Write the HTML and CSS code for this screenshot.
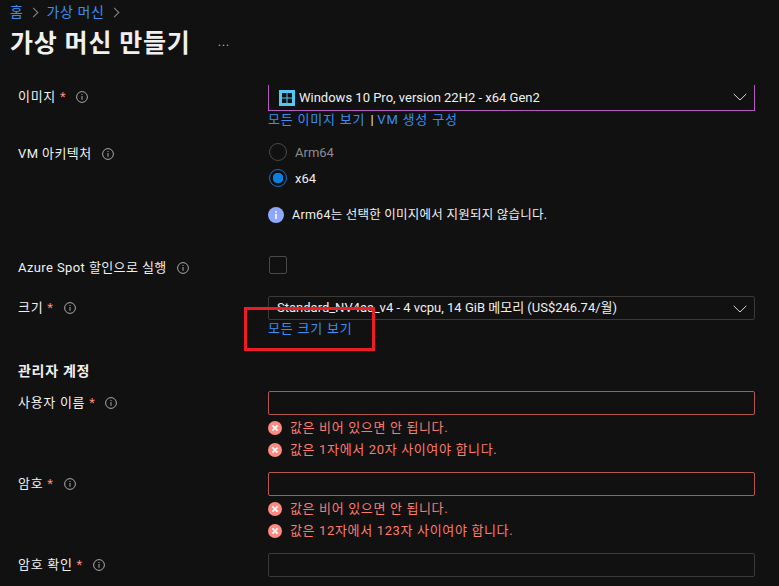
FILE: index.html
```html
<!DOCTYPE html>
<html lang="ko">
<head>
    <meta charset="UTF-8">
    <meta name="viewport" content="width=device-width, initial-scale=1.0">
    <title>가상 머신 만들기</title>
    <link rel="stylesheet" href="styles.css">
</head>
<body>
    <svg class="sprites" width="0" height="0">
        <symbol id="info" viewBox="0 0 12 12">
            <circle cx="6" cy="6" r="5.4" fill="none" stroke="currentColor"/>
            <rect x="5.5" y="5" width="1" height="3.8" fill="currentColor"/>
            <rect x="5.5" y="3" width="1" height="1" fill="currentColor"/>
        </symbol>
        <symbol id="err" viewBox="0 0 14 14">
            <circle cx="7" cy="7" r="7" fill="#ff8a80"/>
            <path d="M4.4 4.4l5.2 5.2M9.6 4.4l-5.2 5.2" stroke="#fff" stroke-width="1.7" fill="none"/>
        </symbol>
        <symbol id="chev" viewBox="0 0 14 8">
            <path d="M.7 .9L7 7l6.3-6.1" stroke="#d6d6d6" stroke-width="1" fill="none"/>
        </symbol>
    </svg>

    <header class="top">
        <nav class="crumbs">
            <a href="#">홈</a><span class="sep"></span>
            <a href="#">가상 머신</a><span class="sep"></span>
        </nav>
        <div class="title-row">
            <h1>가상 머신 만들기</h1>
            <span class="more">...</span>
        </div>
    </header>

    <main class="form">
        <div class="row row-image">
            <div class="label">이미지 <span class="req">*</span><svg class="i"><use href="#info"/></svg></div>
            <div class="field">
                <div class="select select-focus">
                    <span class="win">
                        <svg width="10" height="10" viewBox="0 0 10 10"><path fill="#111" d="M0 0h4.5v4.5H0zM5.5 0H10v4.5H5.5zM0 5.5h4.5V10H0zM5.5 5.5H10V10H5.5z"/></svg>
                    </span>
                    <span>Windows 10 Pro, version 22H2 - x64 Gen2</span>
                    <svg class="chev"><use href="#chev"/></svg>
                </div>
                <div class="links"><a href="#">모든 이미지 보기</a><span class="bar">|</span><a href="#">VM 생성 구성</a></div>
            </div>
        </div>

        <div class="row row-arch">
            <div class="label label-tight">VM 아키텍처<svg class="i i-wide"><use href="#info"/></svg></div>
            <div class="field radios">
                <div class="radio radio-off"><span class="dot"></span>Arm64</div>
                <div class="radio radio-on"><span class="dot"></span>x64</div>
                <div class="note">
                    <svg width="16" height="16" viewBox="0 0 16 16"><circle cx="8" cy="8" r="8" fill="#8fa8ff"/><rect x="7.2" y="6.8" width="1.6" height="5.2" fill="#fff"/><rect x="7.2" y="4" width="1.6" height="1.7" fill="#fff"/></svg>
                    <span>Arm64는 선택한 이미지에서 지원되지 않습니다.</span>
                </div>
            </div>
        </div>

        <div class="row row-spot">
            <div class="label label-tight">Azure Spot 할인으로 실행<svg class="i i-wide"><use href="#info"/></svg></div>
            <div class="field"><div class="check"></div></div>
        </div>

        <div class="row row-size">
            <div class="label">크기 <span class="req">*</span><svg class="i"><use href="#info"/></svg></div>
            <div class="field">
                <div class="select">
                    <span>Standard_NV4as_v4 - 4 vcpu, 14 GiB 메모리 (US$246.74/월)</span>
                    <svg class="chev"><use href="#chev"/></svg>
                </div>
                <div class="links"><a href="#">모든 크기 보기</a></div>
            </div>
        </div>

        <h2>관리자 계정</h2>

        <div class="row row-user">
            <div class="label">사용자 이름 <span class="req">*</span><svg class="i"><use href="#info"/></svg></div>
            <div class="field">
                <div class="input input-bad"></div>
                <div class="err"><svg><use href="#err"/></svg>값은 비어 있으면 안 됩니다.</div>
                <div class="err"><svg><use href="#err"/></svg>값은 1자에서 20자 사이여야 합니다.</div>
            </div>
        </div>

        <div class="row row-pass">
            <div class="label">암호 <span class="req">*</span><svg class="i"><use href="#info"/></svg></div>
            <div class="field">
                <div class="input input-bad"></div>
                <div class="err"><svg><use href="#err"/></svg>값은 비어 있으면 안 됩니다.</div>
                <div class="err"><svg><use href="#err"/></svg>값은 12자에서 123자 사이여야 합니다.</div>
            </div>
        </div>

        <div class="row row-confirm">
            <div class="label">암호 확인 <span class="req">*</span><svg class="i"><use href="#info"/></svg></div>
            <div class="field"><div class="input"></div></div>
        </div>
    </main>

    <!-- 스크린샷 위에 그려진 강조 박스 -->
    <div class="highlight"></div>
</body>
</html>
```

FILE: styles.css
```css
:root {
    --bg: #111111;
    --text: #f0f0f0;
    --link: #3a8ef0;
    --line: #3b3a39;
}

html, body {
    height: 100%;
}

body {
    margin: 0;
    background-color: var(--bg);
    color: var(--text);
    font-family: Roboto, "Noto Sans CJK KR", sans-serif;
    font-size: 13px;
    line-height: 18px;
    overflow: hidden;
    position: relative;
}

a {
    color: var(--link);
    text-decoration: none;
}

.sprites {
    position: absolute;
}

.top {
    height: 85px;
    padding-left: 10px;
}

.crumbs {
    display: flex;
    align-items: center;
    height: 24px;
    font-size: 14px;
    letter-spacing: 0.6px;
}

.sep {
    width: 6px;
    height: 6px;
    margin: 0 9px 0 7px;
    border-top: 1px solid #8a8a8a;
    border-right: 1px solid #8a8a8a;
    transform: rotate(45deg);
}

.title-row {
    display: flex;
    align-items: center;
    height: 40px;
}

h1 {
    margin: 0;
    font-size: 25px;
    font-weight: 700;
    letter-spacing: 0.8px;
    line-height: 40px;
}

.more {
    margin: 0 0 4px 27px;
    color: #a6a6a6;
    font-size: 13px;
    letter-spacing: 0.6px;
}

.row {
    display: grid;
    grid-template-columns: 250px 487px;
    padding-left: 18px;
}

.label {
    display: flex;
    align-items: center;
    height: 24px;
    letter-spacing: 0.7px;
    white-space: pre;
}

.label-tight {
    letter-spacing: 0.4px;
}

.req {
    color: #ff8a80;
}

.i {
    width: 12px;
    height: 12px;
    margin-left: 10px;
    color: #a8a8a8;
}

.select {
    display: flex;
    align-items: center;
    box-sizing: border-box;
    height: 24px;
    padding-left: 8px;
    border: 1px solid var(--line);
    border-radius: 2px;
    position: relative;
}

.select-focus {
    height: 26px;
    padding-left: 10px;
    border: 1px solid #b45fc0;
    border-top: none;
    border-radius: 0;
}

.win {
    display: flex;
    align-items: center;
    justify-content: center;
    width: 16px;
    height: 16px;
    margin-right: 4px;
    background-color: #50c8f8;
}

.chev {
    position: absolute;
    right: 7px;
    top: 8px;
    width: 14px;
    height: 8px;
}

.links {
    height: 18px;
    letter-spacing: 0.8px;
    white-space: pre;
}

.bar {
    margin: 0 3px 0 5px;
    color: #f0f0f0;
}

.row-image {
    height: 57px;
}

.radios {
    margin-top: -3px;
}

.radio {
    display: flex;
    align-items: center;
    box-sizing: border-box;
    height: 26px;
    padding-top: 2px;
}

.radio-off {
    color: #8c8c8c;
}

.dot {
    box-sizing: border-box;
    width: 18px;
    height: 18px;
    margin: -2px 8px 0 1px;
    border: 1px solid #4a4a4a;
    border-radius: 50%;
}

.radio-on .dot {
    border-color: #1b6ec2;
    background: radial-gradient(circle, #0a7fe0 0, #0a7fe0 5px, transparent 5.5px);
}

.note {
    display: flex;
    align-items: center;
    gap: 8px;
    height: 18px;
    margin-top: 15px;
    font-size: 12.5px;
    letter-spacing: 0.25px;
}

.row-arch {
    height: 114px;
}

.row-spot {
    height: 40px;
}

.check {
    box-sizing: border-box;
    width: 18px;
    height: 18px;
    margin-left: 1px;
    border: 1px solid #4a4a4a;
    border-radius: 2px;
}

.row-size {
    height: 42px;
}

h2 {
    margin: 24px 0 0;
    padding-left: 18px;
    font-size: 14px;
    font-weight: 700;
    letter-spacing: 0.7px;
    line-height: 18px;
}

.row-user {
    margin-top: 11px;
    height: 81px;
}

.input {
    box-sizing: border-box;
    height: 24px;
    border: 1px solid var(--line);
    border-radius: 2px;
}

.input-bad {
    border-color: #b4574e;
    margin-bottom: 2px;
}

.err {
    display: flex;
    align-items: center;
    gap: 8px;
    height: 22px;
    color: #ff7a6e;
    letter-spacing: 0.65px;
}

.err svg {
    width: 14px;
    height: 14px;
}

.row-pass {
    height: 81px;
}

.highlight {
    position: absolute;
    left: 244px;
    top: 307px;
    width: 131px;
    height: 44px;
    box-sizing: border-box;
    border: 3px solid #ee1c25;
}
```
